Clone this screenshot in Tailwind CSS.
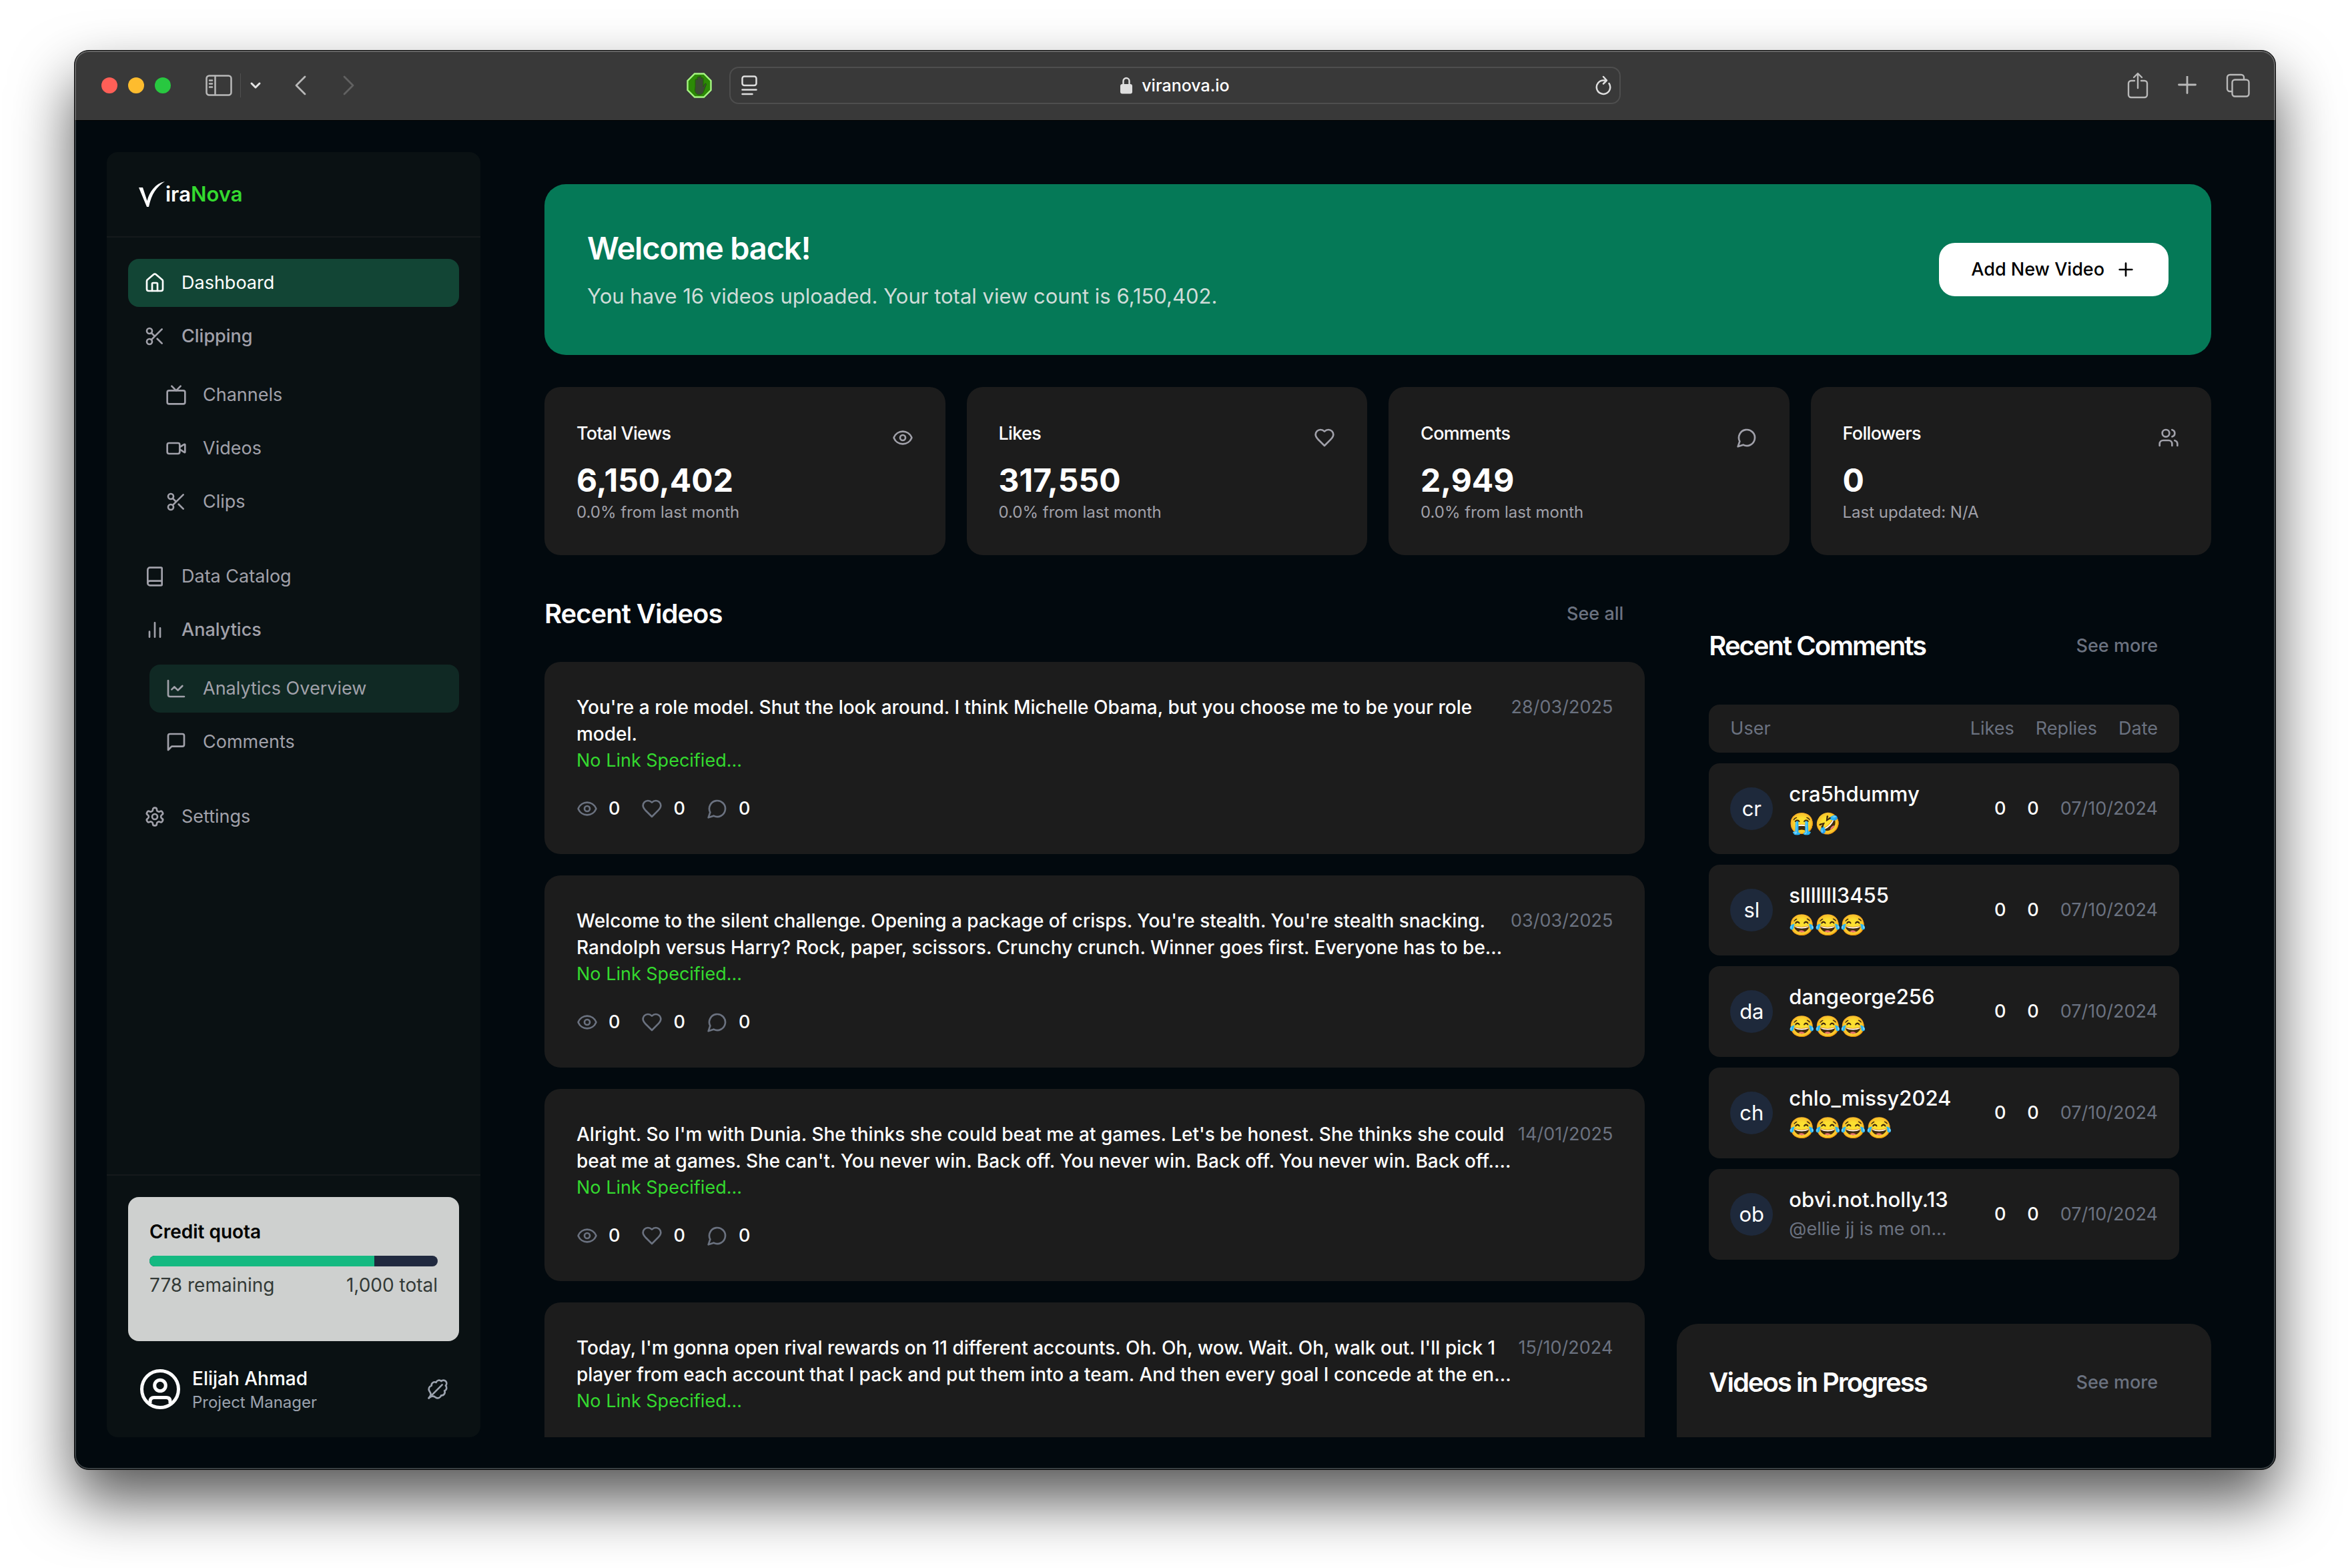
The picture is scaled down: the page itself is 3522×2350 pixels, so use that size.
<!DOCTYPE html>
<html lang="en">
<head>
<meta charset="utf-8">
<meta name="viewport" content="width=device-width, initial-scale=1">
<title>ViraNova – Dashboard</title>
<script src="https://cdn.jsdelivr.net/npm/@tailwindcss/browser@4"></script>
</head>
<body class="h-screen overflow-hidden bg-white px-[111px] pt-[75px] pb-[147px] font-['Inter','Noto_Color_Emoji',sans-serif] text-white">

<!-- Icon set -->
<svg class="hidden" aria-hidden="true">
  <defs>
    <symbol id="house" viewBox="0 0 24 24"><path d="M15 21v-8a1 1 0 0 0-1-1h-4a1 1 0 0 0-1 1v8"/><path d="M3 10a2 2 0 0 1 .709-1.528l7-5.999a2 2 0 0 1 2.582 0l7 5.999A2 2 0 0 1 21 10v9a2 2 0 0 1-2 2H5a2 2 0 0 1-2-2z"/></symbol>
    <symbol id="scissors" viewBox="0 0 24 24"><circle cx="6" cy="6" r="3"/><path d="M8.12 8.12 12 12M20 4 8.12 15.88"/><circle cx="6" cy="18" r="3"/><path d="M14.8 14.8 20 20"/></symbol>
    <symbol id="tv" viewBox="0 0 24 24"><path d="m17 2-5 5-5-5"/><rect width="20" height="15" x="2" y="7" rx="2"/></symbol>
    <symbol id="video" viewBox="0 0 24 24"><path d="m16 13 5.223 3.482a.5.5 0 0 0 .777-.416V7.87a.5.5 0 0 0-.752-.432L16 10.5"/><rect x="2" y="6" width="14" height="12" rx="2"/></symbol>
    <symbol id="book" viewBox="0 0 24 24"><path d="M4 19.5v-15A2.5 2.5 0 0 1 6.5 2H19a1 1 0 0 1 1 1v18a1 1 0 0 1-1 1H6.5a1 1 0 0 1 0-5H20"/></symbol>
    <symbol id="bars" viewBox="0 0 24 24"><path d="M18 20V10M12 20V4M6 20v-6"/></symbol>
    <symbol id="chart" viewBox="0 0 24 24"><path d="M3 3v16a2 2 0 0 0 2 2h16"/><path d="m19 9-5 5-4-4-3 3"/></symbol>
    <symbol id="message-square" viewBox="0 0 24 24"><path d="M21 15a2 2 0 0 1-2 2H7l-4 4V5a2 2 0 0 1 2-2h14a2 2 0 0 1 2 2z"/></symbol>
    <symbol id="settings" viewBox="0 0 24 24"><path d="M12.22 2h-.44a2 2 0 0 0-2 2v.18a2 2 0 0 1-1 1.73l-.43.25a2 2 0 0 1-2 0l-.15-.08a2 2 0 0 0-2.73.73l-.22.38a2 2 0 0 0 .73 2.73l.15.1a2 2 0 0 1 1 1.72v.51a2 2 0 0 1-1 1.74l-.15.09a2 2 0 0 0-.73 2.73l.22.38a2 2 0 0 0 2.73.73l.15-.08a2 2 0 0 1 2 0l.43.25a2 2 0 0 1 1 1.73V20a2 2 0 0 0 2 2h.44a2 2 0 0 0 2-2v-.18a2 2 0 0 1 1-1.73l.43-.25a2 2 0 0 1 2 0l.15.08a2 2 0 0 0 2.73-.73l.22-.39a2 2 0 0 0-.73-2.73l-.15-.08a2 2 0 0 1-1-1.74v-.5a2 2 0 0 1 1-1.74l.15-.09a2 2 0 0 0 .73-2.73l-.22-.38a2 2 0 0 0-2.73-.73l-.15.08a2 2 0 0 1-2 0l-.43-.25a2 2 0 0 1-1-1.73V4a2 2 0 0 0-2-2z"/><circle cx="12" cy="12" r="3"/></symbol>
    <symbol id="eye" viewBox="0 0 24 24"><path d="M2.062 12.348a1 1 0 0 1 0-.696 10.75 10.75 0 0 1 19.876 0 1 1 0 0 1 0 .696 10.75 10.75 0 0 1-19.876 0"/><circle cx="12" cy="12" r="3"/></symbol>
    <symbol id="heart" viewBox="0 0 24 24"><path d="M19 14c1.49-1.46 3-3.21 3-5.5A5.5 5.5 0 0 0 16.5 3c-1.76 0-3 .5-4.5 2-1.5-1.5-2.74-2-4.5-2A5.5 5.5 0 0 0 2 8.5c0 2.3 1.5 4.05 3 5.5l7 7Z"/></symbol>
    <symbol id="message-circle" viewBox="0 0 24 24"><path d="M7.9 20A9 9 0 1 0 4 16.1L2 22Z"/></symbol>
    <symbol id="users" viewBox="0 0 24 24"><path d="M16 21v-2a4 4 0 0 0-4-4H6a4 4 0 0 0-4 4v2"/><circle cx="9" cy="7" r="4"/><path d="M22 21v-2a4 4 0 0 0-3-3.87M16 3.13a4 4 0 0 1 0 7.75"/></symbol>
    <symbol id="plus" viewBox="0 0 24 24"><path d="M5 12h14M12 5v14"/></symbol>
    <symbol id="leaf" viewBox="0 0 24 24"><path d="M2 22c1.25-.987 2.27-1.975 3.9-2.2a5.56 5.56 0 0 1 3.8 1.5 4 4 0 0 0 6.187-2.353 3.5 3.5 0 0 0 3.69-5.116A3.5 3.5 0 0 0 20.95 8 3.5 3.5 0 1 0 16 3.05a3.5 3.5 0 0 0-5.831 1.373 3.5 3.5 0 0 0-5.116 3.69 4 4 0 0 0-2.348 6.155C3.499 15.42 4.409 16.712 4.2 18.1 3.926 19.743 3.014 20.732 2 22"/><path d="M2 22 17 7"/></symbol>
  </defs>
</svg>

<div class="relative flex h-full flex-col overflow-hidden rounded-[22px] border border-black bg-[#02090e] shadow-[0_46px_90px_rgba(0,0,0,0.66)]">

  <!-- Browser toolbar -->
  <header class="flex h-[104px] shrink-0 items-center bg-[#393939]">
    <div class="flex flex-1 items-center pr-[26px] pl-10">
      <div class="flex gap-4">
        <button aria-label="Close" class="size-6 rounded-full bg-[#ff5f57]"></button>
        <button aria-label="Minimise" class="size-6 rounded-full bg-[#febc2e]"></button>
        <button aria-label="Zoom" class="size-6 rounded-full bg-[#28c840]"></button>
      </div>
      <button aria-label="Sidebar" class="ml-[52px] text-[#b9b9b9]">
        <svg class="h-8 w-10" viewBox="0 0 40 32" fill="none" stroke="currentColor" stroke-width="2.5" stroke-linecap="round"><rect x="1.5" y="1.5" width="37" height="29" rx="4"/><path d="M14.5 2v28M6 8.500h4M6 13.500h4M6 18.500h4"/></svg>
      </button>
      <span class="ml-3 h-9 w-px bg-[#505050]"></span>
      <button aria-label="Tab groups" class="ml-3 text-[#e4e4e4]">
        <svg class="h-4 w-5" viewBox="0 0 20 16" fill="none" stroke="currentColor" stroke-width="3" stroke-linecap="round" stroke-linejoin="round"><path d="m4 5 6 6 6-6"/></svg>
      </button>
      <button aria-label="Back" class="ml-12 text-[#b9b9b9]">
        <svg class="h-8 w-5" viewBox="0 0 20 32" fill="none" stroke="currentColor" stroke-width="2.800" stroke-linecap="round" stroke-linejoin="round"><path d="M16 3 3 16l13 13"/></svg>
      </button>
      <button aria-label="Forward" class="ml-13 text-[#616161]">
        <svg class="h-8 w-5" viewBox="0 0 20 32" fill="none" stroke="currentColor" stroke-width="2.800" stroke-linecap="round" stroke-linejoin="round"><path d="m3 3 13 13L3 29"/></svg>
      </button>
      <button aria-label="Ad blocker" class="ml-auto">
        <svg class="size-[38px]" viewBox="0 0 38 38"><path d="M12 1.500h14L36.500 12v14L26 36.500H12L1.500 26V12z" fill="#2c8a06" stroke="#a5f582" stroke-width="2.400"/><path d="M13 21V11a1.500 1.500 0 0 1 3 0V7.500a1.500 1.500 0 0 1 3 0V6.500a1.500 1.500 0 0 1 3 0V9a1.500 1.500 0 0 1 3 0v12l2-4c1-1.600 3-1 2.500.6L26 27c-1 4-3.500 6-7 6s-6.500-3-6.500-7z" fill="#3c4a35" stroke="#1f6304" stroke-width="1"/></svg>
      </button>
    </div>
    <div class="relative flex h-14 w-[40.5%] items-center justify-center gap-[14px] rounded-[14px] border-2 border-[#4e4e4e] px-4">
      <button aria-label="Reader" class="absolute left-4 text-[#dedede]">
        <svg class="h-8 w-6" viewBox="0 0 24 32" fill="none" stroke="currentColor" stroke-width="2.500" stroke-linecap="round"><rect x="1.500" y="2.500" width="21" height="13.500" rx="3"/><path d="M1.500 22.500h21M1.500 29h15"/></svg>
      </button>
      <svg class="h-[26px] w-[18px] text-[#dedede]" viewBox="0 0 18 26" aria-hidden="true"><path d="M4.500 12V6.500a4.500 4.500 0 0 1 9 0V12" fill="none" stroke="currentColor" stroke-width="2.400"/><rect y="11" width="18" height="14.500" rx="3" fill="currentColor"/></svg>
      <input aria-label="Address" value="viranova.io" class="field-sizing-content bg-transparent text-[25px] leading-8 font-medium text-white outline-none">
      <button aria-label="Reload" class="absolute right-3 text-[#dedede]">
        <svg class="h-8 w-6" viewBox="0 0 24 32" fill="none" stroke="currentColor" stroke-width="2.500" stroke-linecap="round" stroke-linejoin="round"><path d="M20.500 13A10.200 10.200 0 1 1 12 8.500h4"/><path d="m12 3 5 5.500-5 5"/></svg>
      </button>
    </div>
    <div class="flex flex-1 items-center justify-end gap-11 pr-[38px] pl-7 text-[#b9b9b9]">
      <button aria-label="Share"><svg class="h-10 w-8" viewBox="0 0 32 40" fill="none" stroke="currentColor" stroke-width="2.400" stroke-linecap="round" stroke-linejoin="round"><path d="M11 13H6a4 4 0 0 0-4 4v17a4 4 0 0 0 4 4h20a4 4 0 0 0 4-4V17a4 4 0 0 0-4-4h-5M16 24V3M10 8l6-6 6 6"/></svg></button>
      <button aria-label="New tab"><svg class="size-7" viewBox="0 0 28 28" fill="none" stroke="currentColor" stroke-width="2.800" stroke-linecap="round"><path d="M1.500 13h25M14 .5v25"/></svg></button>
      <button aria-label="Tab overview"><svg class="size-9" viewBox="0 0 36 36" fill="none" stroke="currentColor" stroke-width="2.400" stroke-linejoin="round"><path d="M9 27H6a4 4 0 0 1-4-4V6a4 4 0 0 1 4-4h17a4 4 0 0 1 4 4v3"/><rect x="9.500" y="9.500" width="25" height="25" rx="4"/></svg></button>
    </div>
  </header>

  <!-- App -->
  <div class="flex min-h-0 flex-1 gap-24 pt-12 pr-24 pb-12 pl-12 shadow-[inset_0_1px_0_#000]">

    <aside class="flex w-[560px] shrink-0 flex-col rounded-[16px] bg-[#0a1113]">
      <a href="#" class="flex h-32 shrink-0 items-center border-b-2 border-[#15191b] pl-12" aria-label="ViraNova">
        <svg class="h-10 w-10 fill-white" viewBox="0 0 40 40" aria-hidden="true"><path d="M0 10h6l6.500 20C16 16 25 4 39 1 27 9 19 19 15 39h-3z"/></svg>
        <span class="text-[31px] leading-10 font-semibold">ira<span class="text-[#34d92f]">Nova</span></span>
      </a>

      <nav class="flex flex-1 flex-col gap-2 p-8 text-[27px] leading-10 text-[#a1a1aa] [&_svg]:size-8 [&_svg]:fill-none [&_svg]:stroke-current [&_svg]:stroke-2 [&_svg]:[stroke-linecap:round] [&_svg]:[stroke-linejoin:round]">
        <a href="#" class="flex items-center gap-6 rounded-[16px] bg-[#124535] px-6 py-4 text-white"><svg><use href="#house"/></svg>Dashboard</a>
        <a href="#" class="flex items-center gap-6 rounded-[16px] px-6 py-4 font-medium"><svg><use href="#scissors"/></svg>Clipping</a>
        <div class="my-2 mb-8 flex flex-col gap-2 pl-8">
          <a href="#" class="flex items-center gap-6 rounded-[16px] px-6 py-4"><svg><use href="#tv"/></svg>Channels</a>
          <a href="#" class="flex items-center gap-6 rounded-[16px] px-6 py-4"><svg><use href="#video"/></svg>Videos</a>
          <a href="#" class="flex items-center gap-6 rounded-[16px] px-6 py-4"><svg><use href="#scissors"/></svg>Clips</a>
        </div>
        <a href="#" class="flex items-center gap-6 rounded-[16px] px-6 py-4"><svg><use href="#book"/></svg>Data Catalog</a>
        <a href="#" class="flex items-center gap-6 rounded-[16px] px-6 py-4 font-medium"><svg><use href="#bars"/></svg>Analytics</a>
        <div class="my-2 mb-8 flex flex-col gap-2 pl-8">
          <a href="#" class="flex items-center gap-6 rounded-[16px] bg-[#102924] px-6 py-4"><svg><use href="#chart"/></svg>Analytics Overview</a>
          <a href="#" class="flex items-center gap-6 rounded-[16px] px-6 py-4"><svg><use href="#message-square"/></svg>Comments</a>
        </div>
        <a href="#" class="flex items-center gap-6 rounded-[16px] px-6 py-4"><svg><use href="#settings"/></svg>Settings</a>
      </nav>

      <div class="border-t-2 border-[#15191b] px-8 pt-8 pb-9">
        <section class="h-[216px] rounded-[16px] bg-[#ced0cf] p-8 text-[28px] leading-10">
          <h2 class="font-semibold text-black">Credit quota</h2>
          <div role="progressbar" aria-label="Credits remaining" aria-valuenow="778" aria-valuemax="1000" class="my-4 mb-2 h-4 overflow-hidden rounded-full bg-[#20293f]">
            <div class="h-full bg-[#14b981]" style="width:78%"></div>
          </div>
          <div class="flex justify-between text-[#333a37]"><span>778 remaining</span><span>1,000 total</span></div>
        </section>
        <div class="mt-9 flex items-center pr-4 pl-4">
          <svg class="size-16" viewBox="-2 -2 64 64" fill="none" stroke="#fff" stroke-width="5" aria-hidden="true"><circle cx="30" cy="30" r="27.500"/><circle cx="30" cy="24.500" r="8.300"/><path d="M15 51v-2.500q0-6 6-6h18q6 0 6 6V51"/></svg>
          <div class="ml-4">
            <p class="text-[28px] leading-10 font-medium">Elijah Ahmad</p>
            <p class="text-[24px] leading-8 text-[#9ca3af]">Project Manager</p>
          </div>
          <button aria-label="Theme" class="ml-auto text-[#9ca3af]"><svg class="size-8 fill-none stroke-current stroke-2 [stroke-linecap:round] [stroke-linejoin:round]"><use href="#leaf"/></svg></button>
        </div>
      </div>
    </aside>

    <main class="min-w-0 flex-1 overflow-hidden pt-12">
      <section class="flex items-center justify-between rounded-[32px] bg-[#057957] p-16">
        <div>
          <h1 class="text-[47px] leading-[64px] font-semibold tracking-tight">Welcome back!</h1>
          <p class="mt-4 text-[31px] leading-[48px] text-[#cfdcd8]">You have 16 videos uploaded. Your total view count is 6,150,402.</p>
        </div>
        <button class="flex h-20 items-center gap-4 rounded-[24px] bg-white px-12 text-[27px] leading-10 font-medium text-black">Add New Video<svg class="size-8 fill-none stroke-current stroke-2 [stroke-linecap:round]" aria-hidden="true"><use href="#plus"/></svg></button>
      </section>

      <section class="mt-12 grid grid-cols-4 gap-8 [&_svg]:size-8 [&_svg]:fill-none [&_svg]:stroke-current [&_svg]:stroke-2 [&_svg]:[stroke-linecap:round] [&_svg]:[stroke-linejoin:round]">
        <article class="rounded-[24px] bg-[#1c1c1c] p-12 text-[#a1a1aa]">
          <div class="mb-4 flex items-end justify-between"><h2 class="text-[27px] leading-[44px] font-medium tracking-tight text-white">Total Views</h2><svg><use href="#eye"/></svg></div>
          <p class="text-[48px] leading-[64px] font-bold text-white">6,150,402</p>
          <p class="text-[24px] leading-8">0.0% from last month</p>
        </article>
        <article class="rounded-[24px] bg-[#1c1c1c] p-12 text-[#a1a1aa]">
          <div class="mb-4 flex items-end justify-between"><h2 class="text-[27px] leading-[44px] font-medium tracking-tight text-white">Likes</h2><svg><use href="#heart"/></svg></div>
          <p class="text-[48px] leading-[64px] font-bold text-white">317,550</p>
          <p class="text-[24px] leading-8">0.0% from last month</p>
        </article>
        <article class="rounded-[24px] bg-[#1c1c1c] p-12 text-[#a1a1aa]">
          <div class="mb-4 flex items-end justify-between"><h2 class="text-[27px] leading-[44px] font-medium tracking-tight text-white">Comments</h2><svg><use href="#message-circle"/></svg></div>
          <p class="text-[48px] leading-[64px] font-bold text-white">2,949</p>
          <p class="text-[24px] leading-8">0.0% from last month</p>
        </article>
        <article class="rounded-[24px] bg-[#1c1c1c] p-12 text-[#a1a1aa]">
          <div class="mb-4 flex items-end justify-between"><h2 class="text-[27px] leading-[44px] font-medium tracking-tight text-white">Followers</h2><svg><use href="#users"/></svg></div>
          <p class="text-[48px] leading-[64px] font-bold text-white">0</p>
          <p class="text-[24px] leading-8">Last updated: N/A</p>
        </article>
      </section>

      <div class="mt-12 grid grid-cols-3 gap-12 text-[27px] leading-10">

        <section class="col-span-2">
          <div class="flex h-20 items-center justify-between">
            <h2 class="text-[40px] leading-[56px] font-semibold tracking-tight">Recent Videos</h2>
            <a href="#" class="px-8 font-medium text-[#6b7280]">See all</a>
          </div>
          <div class="mt-8 flex flex-col gap-8 [&_svg]:size-8 [&_svg]:fill-none [&_svg]:stroke-[#6b7280] [&_svg]:stroke-2 [&_svg]:[stroke-linecap:round] [&_svg]:[stroke-linejoin:round]">
            <article class="rounded-[24px] bg-[#1c1c1c] p-12">
              <div class="flex justify-between">
                <div>
                  <h3 class="text-[28px] font-medium whitespace-nowrap">You're a role model. Shut the look around. I think Michelle Obama, but you choose me to be your role<br>model.</h3>
                  <p class="text-[#34d92f]">No Link Specified...</p>
                </div>
                <time class="text-[#6b7280]">28/03/2025</time>
              </div>
              <div class="mt-8 flex gap-8 font-medium"><span class="flex items-center gap-4"><svg><use href="#eye"/></svg>0</span><span class="flex items-center gap-4"><svg><use href="#heart"/></svg>0</span><span class="flex items-center gap-4"><svg><use href="#message-circle"/></svg>0</span></div>
            </article>
            <article class="rounded-[24px] bg-[#1c1c1c] p-12">
              <div class="flex justify-between">
                <div>
                  <h3 class="text-[28px] font-medium whitespace-nowrap">Welcome to the silent challenge. Opening a package of crisps. You're stealth. You're stealth snacking.<br>Randolph versus Harry? Rock, paper, scissors. Crunchy crunch. Winner goes first. Everyone has to be...</h3>
                  <p class="text-[#34d92f]">No Link Specified...</p>
                </div>
                <time class="text-[#6b7280]">03/03/2025</time>
              </div>
              <div class="mt-8 flex gap-8 font-medium"><span class="flex items-center gap-4"><svg><use href="#eye"/></svg>0</span><span class="flex items-center gap-4"><svg><use href="#heart"/></svg>0</span><span class="flex items-center gap-4"><svg><use href="#message-circle"/></svg>0</span></div>
            </article>
            <article class="rounded-[24px] bg-[#1c1c1c] p-12">
              <div class="flex justify-between">
                <div>
                  <h3 class="text-[28px] font-medium whitespace-nowrap">Alright. So I'm with Dunia. She thinks she could beat me at games. Let's be honest. She thinks she could<br>beat me at games. She can't. You never win. Back off. You never win. Back off. You never win. Back off....</h3>
                  <p class="text-[#34d92f]">No Link Specified...</p>
                </div>
                <time class="text-[#6b7280]">14/01/2025</time>
              </div>
              <div class="mt-8 flex gap-8 font-medium"><span class="flex items-center gap-4"><svg><use href="#eye"/></svg>0</span><span class="flex items-center gap-4"><svg><use href="#heart"/></svg>0</span><span class="flex items-center gap-4"><svg><use href="#message-circle"/></svg>0</span></div>
            </article>
            <article class="rounded-[24px] bg-[#1c1c1c] p-12">
              <div class="flex justify-between">
                <div>
                  <h3 class="text-[28px] font-medium whitespace-nowrap">Today, I'm gonna open rival rewards on 11 different accounts. Oh. Oh, wow. Wait. Oh, walk out. I'll pick 1<br>player from each account that I pack and put them into a team. And then every goal I concede at the en...</h3>
                  <p class="text-[#34d92f]">No Link Specified...</p>
                </div>
                <time class="text-[#6b7280]">15/10/2024</time>
              </div>
              <div class="mt-8 h-10"></div>
            </article>
          </div>
        </section>

        <div class="flex flex-col gap-12">
          <section class="p-12">
            <div class="flex h-20 items-center justify-between">
              <h2 class="text-[40px] leading-[56px] font-semibold tracking-tighter">Recent Comments</h2>
              <a href="#" class="px-8 font-medium text-[#6b7280]">See more</a>
            </div>
            <table class="mt-12 block">
              <thead class="block">
                <tr class="flex gap-8 rounded-[16px] bg-[#1c1c1c] px-8 py-4 text-[#6b7280]"><th class="flex-1 text-left font-normal">User</th><th class="font-normal">Likes</th><th class="font-normal">Replies</th><th class="font-normal">Date</th></tr>
              </thead>
              <tbody class="mt-4 flex flex-col gap-4">
                <tr class="flex h-[136px] items-center gap-8 rounded-[16px] bg-[#1c1c1c] px-8"><td class="flex flex-1 items-center gap-6"><span class="flex size-16 items-center justify-center rounded-full bg-[#1e293b] text-[31px]">cr</span><div><p class="text-[31px] leading-10 font-medium">cra5hdummy</p><p class="mt-1 text-[31px]">😭🤣</p></div></td><td class="font-medium">0</td><td class="font-medium">0</td><td class="text-[#6b7280]">07/10/2024</td></tr>
                <tr class="flex h-[136px] items-center gap-8 rounded-[16px] bg-[#1c1c1c] px-8"><td class="flex flex-1 items-center gap-6"><span class="flex size-16 items-center justify-center rounded-full bg-[#1e293b] text-[31px]">sl</span><div><p class="text-[31px] leading-10 font-medium">slllllll3455</p><p class="mt-1 text-[31px]">😂😂😂</p></div></td><td class="font-medium">0</td><td class="font-medium">0</td><td class="text-[#6b7280]">07/10/2024</td></tr>
                <tr class="flex h-[136px] items-center gap-8 rounded-[16px] bg-[#1c1c1c] px-8"><td class="flex flex-1 items-center gap-6"><span class="flex size-16 items-center justify-center rounded-full bg-[#1e293b] text-[31px]">da</span><div><p class="text-[31px] leading-10 font-medium">dangeorge256</p><p class="mt-1 text-[31px]">😂😂😂</p></div></td><td class="font-medium">0</td><td class="font-medium">0</td><td class="text-[#6b7280]">07/10/2024</td></tr>
                <tr class="flex h-[136px] items-center gap-8 rounded-[16px] bg-[#1c1c1c] px-8"><td class="flex flex-1 items-center gap-6"><span class="flex size-16 items-center justify-center rounded-full bg-[#1e293b] text-[31px]">ch</span><div><p class="text-[31px] leading-10 font-medium">chlo_missy2024</p><p class="mt-1 text-[31px]">😂😂😂😂</p></div></td><td class="font-medium">0</td><td class="font-medium">0</td><td class="text-[#6b7280]">07/10/2024</td></tr>
                <tr class="flex h-[136px] items-center gap-8 rounded-[16px] bg-[#1c1c1c] px-8"><td class="flex flex-1 items-center gap-6"><span class="flex size-16 items-center justify-center rounded-full bg-[#1e293b] text-[31px]">ob</span><div><p class="text-[31px] leading-10 font-medium">obvi.not.holly.13</p><p class="mt-1 text-[#6b7280]">@ellie jj is me on...</p></div></td><td class="font-medium">0</td><td class="font-medium">0</td><td class="text-[#6b7280]">07/10/2024</td></tr>
              </tbody>
            </table>
          </section>
          <section class="flex-1 rounded-[32px] bg-[#1c1c1c] p-12">
            <div class="flex h-20 items-center justify-between">
              <h2 class="text-[40px] leading-[56px] font-semibold tracking-tighter">Videos in Progress</h2>
              <a href="#" class="px-8 font-medium text-[#6b7280]">See more</a>
            </div>
          </section>
        </div>
      </div>
    </main>
  </div>

  <!-- Light rim of the window -->
  <div class="pointer-events-none absolute inset-0 rounded-[21px] shadow-[inset_0_0_0_2px_rgba(255,255,255,0.22)]"></div>
</div>
</body>
</html>
